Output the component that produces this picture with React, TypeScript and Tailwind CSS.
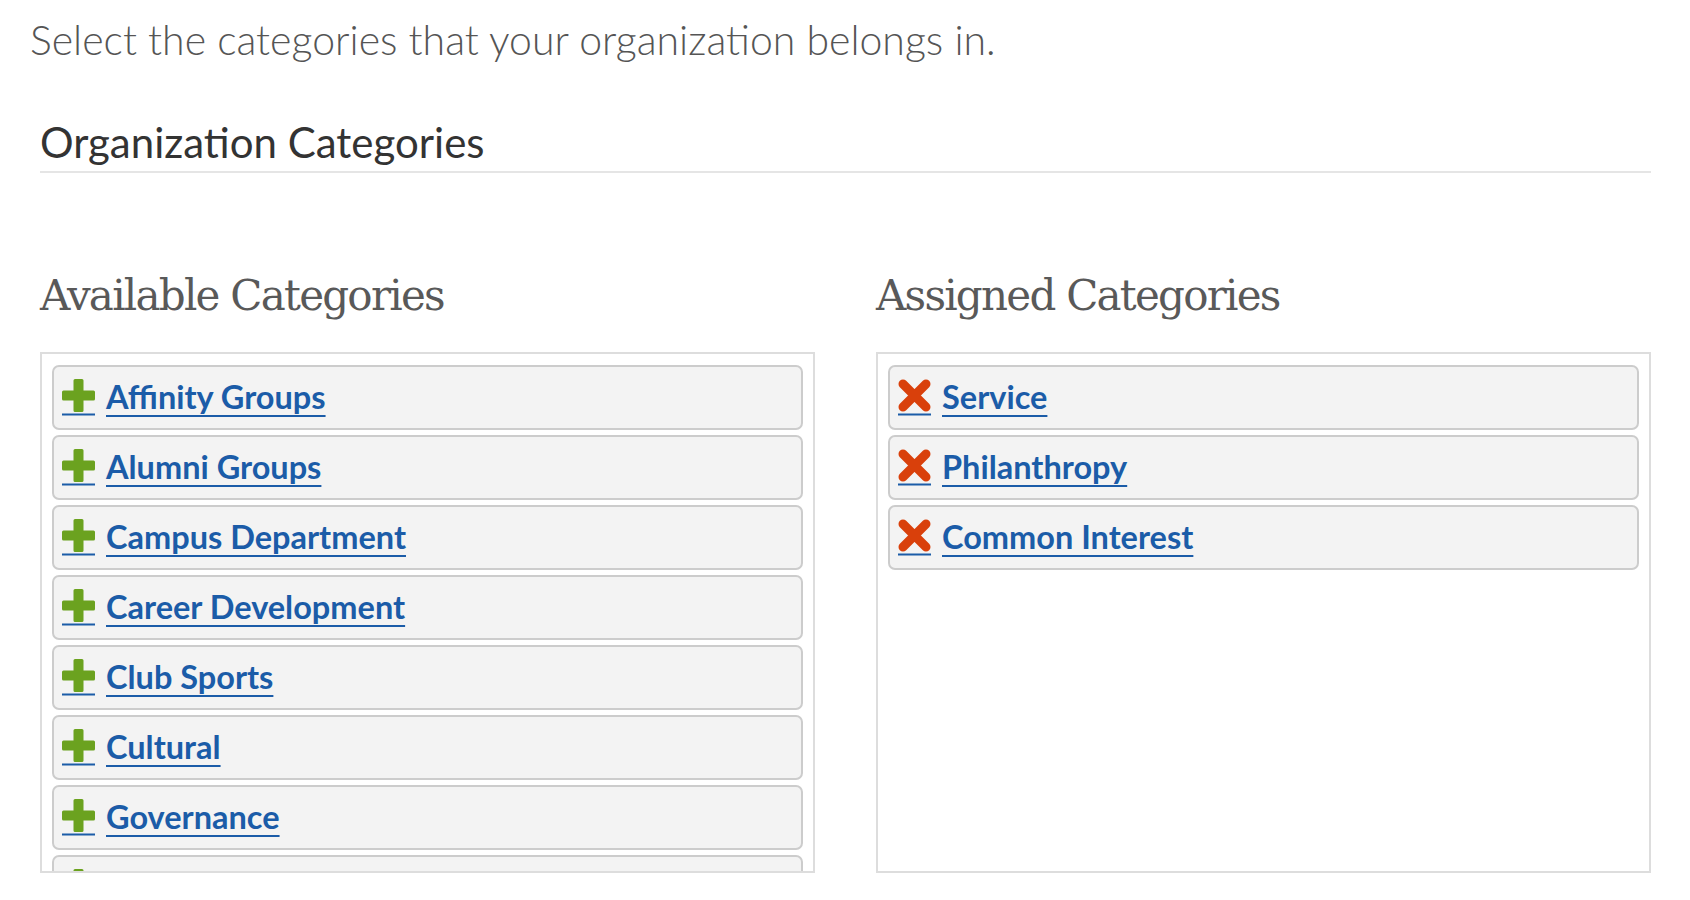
import React from 'react'

const available = [
  'Affinity Groups',
  'Alumni Groups',
  'Campus Department',
  'Career Development',
  'Club Sports',
  'Cultural',
  'Governance',
  'Graduate',
]

const assigned = ['Service', 'Philanthropy', 'Common Interest']

function PlusIcon() {
  return (
    <svg width="33" height="37" viewBox="0 0 33 37" className="shrink-0">
      <path
        d="M11.5 1.5 Q11.5 0 13 0 H20 Q21.5 0 21.5 1.5 V11.5 H31.5 Q33 11.5 33 13 V20 Q33 21.5 31.5 21.5 H21.5 V31.5 Q21.5 33 20 33 H13 Q11.5 33 11.5 31.5 V21.5 H1.5 Q0 21.5 0 20 V13 Q0 11.5 1.5 11.5 H11.5 Z"
        fill="#6ba21f"
      />
      <rect x="0" y="34.5" width="33" height="2" fill="#1b5ca8" />
    </svg>
  )
}

function RemoveIcon() {
  return (
    <svg width="33" height="37" viewBox="0 0 33 37" className="shrink-0">
      <path
        d="M5 5 L28 28 M28 5 L5 28"
        stroke="#d9400b"
        strokeWidth="9"
        strokeLinecap="round"
      />
      <rect x="0" y="34.5" width="33" height="2" fill="#1b5ca8" />
    </svg>
  )
}

function Item({ label, kind }: { label: string; kind: 'add' | 'remove' }) {
  return (
    <div className="flex h-[65px] shrink-0 items-center gap-[11px] rounded-[7px] border-2 border-[#cccccc] bg-[#f3f3f3] px-[8px]">
      {kind === 'add' ? <PlusIcon /> : <RemoveIcon />}
      <a
        href="#"
        className="text-[32.5px] font-bold leading-none text-[#1b5ca8] underline decoration-2 underline-offset-[6px]"
      >
        {label}
      </a>
    </div>
  )
}

function Column({
  title,
  items,
  kind,
}: {
  title: string
  items: string[]
  kind: 'add' | 'remove'
}) {
  return (
    <div className="flex flex-col">
      <h2 className="h-[119px] pt-[35px] font-['DejaVu_Serif',serif] text-[42px] leading-[56px] tracking-[-1.75px] text-[#595959]">
        {title}
      </h2>
      <div className="flex h-[521px] flex-col gap-[5px] overflow-hidden border-2 border-[#dddddd] bg-white px-[10px] pt-[11px]">
        {items.map((i) => (
          <Item key={i} label={i} kind={kind} />
        ))}
      </div>
    </div>
  )
}

export default function App() {
  return (
    <div className="min-h-screen bg-white pl-[30px] pr-[39px] font-['Lato',sans-serif]">
      <p className="pt-[12px] text-[41px] font-light leading-[56px] text-[#555555]">
        Select the categories that your organization belongs in.
      </p>
      <div className="pl-[10px]">
        <h1 className="mt-[48px] border-b-2 border-[#e5e5e5] pb-[3px] text-[42px] font-normal leading-[52px] text-[#333333]">
          Organization Categories
        </h1>
        <div className="mt-[60px] grid grid-cols-2 gap-[61px]">
          <Column title="Available Categories" items={available} kind="add" />
          <Column title="Assigned Categories" items={assigned} kind="remove" />
        </div>
      </div>
    </div>
  )
}
